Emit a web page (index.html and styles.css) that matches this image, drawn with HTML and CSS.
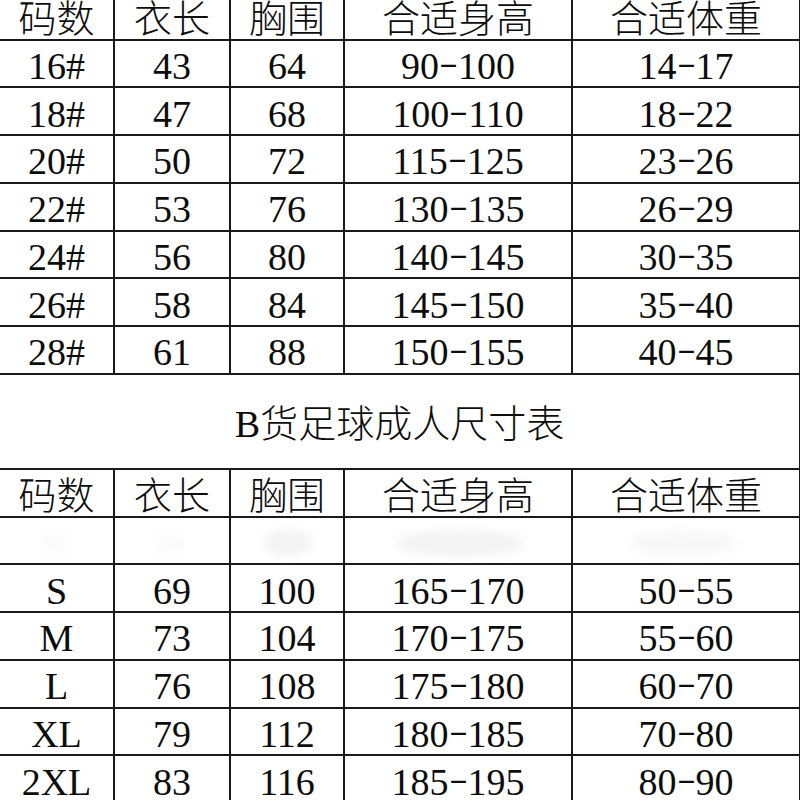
FILE: index.html
```html
<!DOCTYPE html>
<html lang="zh">
<head>
<meta charset="utf-8">
<title>尺寸表</title>
<link rel="stylesheet" href="styles.css">
</head>
<body>
<table class="size-table">
  <colgroup>
    <col class="c1"><col class="c2"><col class="c3"><col class="c4"><col class="c5">
  </colgroup>
  <tbody>
    <tr><th>码数</th><th>衣长</th><th>胸围</th><th>合适身高</th><th>合适体重</th></tr>
    <tr><td>16#</td><td>43</td><td>64</td><td>90<span class="dash">-</span>100</td><td>14<span class="dash">-</span>17</td></tr>
    <tr><td>18#</td><td>47</td><td>68</td><td>100<span class="dash">-</span>110</td><td>18<span class="dash">-</span>22</td></tr>
    <tr><td>20#</td><td>50</td><td>72</td><td>115<span class="dash">-</span>125</td><td>23<span class="dash">-</span>26</td></tr>
    <tr><td>22#</td><td>53</td><td>76</td><td>130<span class="dash">-</span>135</td><td>26<span class="dash">-</span>29</td></tr>
    <tr><td>24#</td><td>56</td><td>80</td><td>140<span class="dash">-</span>145</td><td>30<span class="dash">-</span>35</td></tr>
    <tr><td>26#</td><td>58</td><td>84</td><td>145<span class="dash">-</span>150</td><td>35<span class="dash">-</span>40</td></tr>
    <tr><td>28#</td><td>61</td><td>88</td><td>150<span class="dash">-</span>155</td><td>40<span class="dash">-</span>45</td></tr>
    <tr class="title-row"><td colspan="5">B货足球成人尺寸表</td></tr>
    <tr><th>码数</th><th>衣长</th><th>胸围</th><th>合适身高</th><th>合适体重</th></tr>
    <tr class="blank-row"><td><span class="smudge s1"></span></td><td><span class="smudge s2"></span></td><td><span class="smudge s3"></span></td><td><span class="smudge s4"></span></td><td><span class="smudge s5"></span></td></tr>
    <tr><td>S</td><td>69</td><td>100</td><td>165<span class="dash">-</span>170</td><td>50<span class="dash">-</span>55</td></tr>
    <tr><td>M</td><td>73</td><td>104</td><td>170<span class="dash">-</span>175</td><td>55<span class="dash">-</span>60</td></tr>
    <tr><td>L</td><td>76</td><td>108</td><td>175<span class="dash">-</span>180</td><td>60<span class="dash">-</span>70</td></tr>
    <tr><td>XL</td><td>79</td><td>112</td><td>180<span class="dash">-</span>185</td><td>70<span class="dash">-</span>80</td></tr>
    <tr><td>2XL</td><td>83</td><td>116</td><td>185<span class="dash">-</span>195</td><td>80<span class="dash">-</span>90</td></tr>
  </tbody>
</table>
</body>
</html>
```
FILE: styles.css
```css
html, body {
  margin: 0;
  padding: 0;
  background: #ffffff;
  overflow: hidden;
}

.size-table {
  border-collapse: collapse;
  table-layout: fixed;
  width: 801px;
  margin-top: -9px;
  margin-left: -2px;
  font-family: "Liberation Serif", "Noto Sans CJK SC", serif;
  font-size: 38px;
  color: #0d0d0d;
}

.c1 { width: 115px; }
.c2 { width: 116px; }
.c3 { width: 114px; }
.c4 { width: 228px; }
.c5 { width: 228px; }

.size-table th,
.size-table td {
  border: 2px solid #1a1a1a;
  height: 47.71px;
  padding: 0;
  text-align: center;
  vertical-align: middle;
  line-height: 1;
  font-weight: 400;
  box-sizing: border-box;
}

.size-table th {
  font-weight: 300;
  padding-top: 7px;
}

.size-table td {
  padding-top: 5px;
}

.title-row td {
  height: 95.42px;
  font-weight: 300;
  padding-top: 6px;
}

.blank-row td {
  position: relative;
}

.dash {
  display: inline-block;
  width: 0.5em;
  text-align: center;
  transform: translateY(-0.08em) scaleX(1.5) scaleY(0.75);
}

.smudge {
  position: absolute;
  top: 12px;
  height: 26px;
  border-radius: 50%;
  background: #f3f3f3;
  filter: blur(5px);
}
.s1 { left: 40px; width: 30px; opacity: 0.3; }
.s2 { left: 40px; width: 30px; opacity: 0.3; }
.s3 { left: 32px; width: 50px; }
.s4 { left: 50px; width: 130px; }
.s5 { left: 55px; width: 110px; opacity: 0.6; }
```
